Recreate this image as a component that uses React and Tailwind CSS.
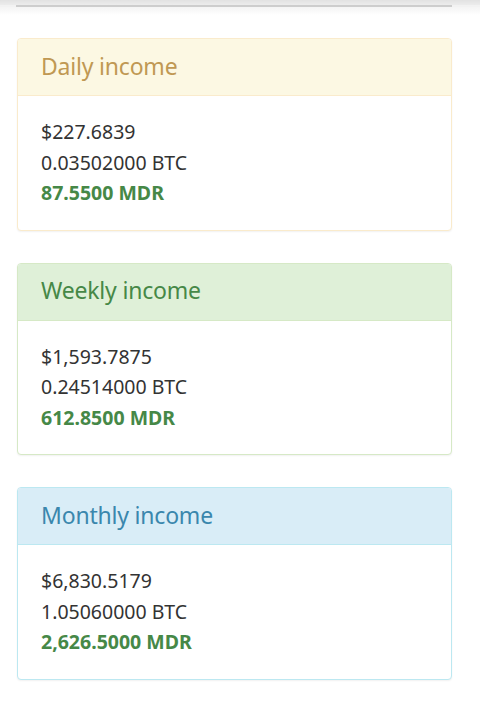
import React from "react";

const panels = [
  {
    title: "Daily income",
    usd: "$227.6839",
    btc: "0.03502000 BTC",
    mdr: "87.5500 MDR",
    border: "border-[#faebcc]",
    head: "bg-[#fcf8e3] text-[#c09853] border-[#faebcc]",
  },
  {
    title: "Weekly income",
    usd: "$1,593.7875",
    btc: "0.24514000 BTC",
    mdr: "612.8500 MDR",
    border: "border-[#d6e9c6]",
    head: "bg-[#dff0d8] text-[#468847] border-[#d6e9c6]",
  },
  {
    title: "Monthly income",
    usd: "$6,830.5179",
    btc: "1.05060000 BTC",
    mdr: "2,626.5000 MDR",
    border: "border-[#bce8f1]",
    head: "bg-[#d9edf7] text-[#3a87ad] border-[#bce8f1]",
  },
];

const IncomePanel = ({ title, usd, btc, mdr, border, head }) => (
  <div className={`rounded-[4px] border bg-white shadow-[0_1px_2px_rgba(0,0,0,0.06)] ${border}`}>
    {/* Panel heading */}
    <div className={`h-[57px] rounded-t-[3px] border-b px-[23px] pb-[2px] flex items-center text-[23px] tracking-[-0.2px] ${head}`}>
      {title}
    </div>

    {/* Panel body */}
    <div className="px-[23px] pt-[21px] pb-[21px] text-[19.5px] leading-[30.5px] text-[#333]">
      <p>{usd}</p>
      <p>{btc}</p>
      <p className="font-bold text-[#468847]">{mdr}</p>
    </div>
  </div>
);

export default function App() {
  return (
    <div
      className="w-[480px] h-[708px] bg-white overflow-hidden"
      style={{ fontFamily: '"Noto Sans", "Open Sans", sans-serif' }}
    >
      {/* Top bar edge with shadow */}
      <div className="h-[5px] bg-gradient-to-b from-[#e2e2e2] to-[#ececec]" />
      <div className="h-[2px] bg-[#f2f2f2]">
        <div className="ml-[16px] w-[436px] h-[2px] bg-[#cdcdcd]" />
      </div>
      <div className="h-[8px] bg-gradient-to-b from-[#f4f4f4] to-white" />

      <div className="ml-[17px] w-[435px] pt-[23px] flex flex-col gap-[32px]">
        {panels.map((p) => (
          <IncomePanel key={p.title} {...p} />
        ))}
      </div>
    </div>
  );
}
